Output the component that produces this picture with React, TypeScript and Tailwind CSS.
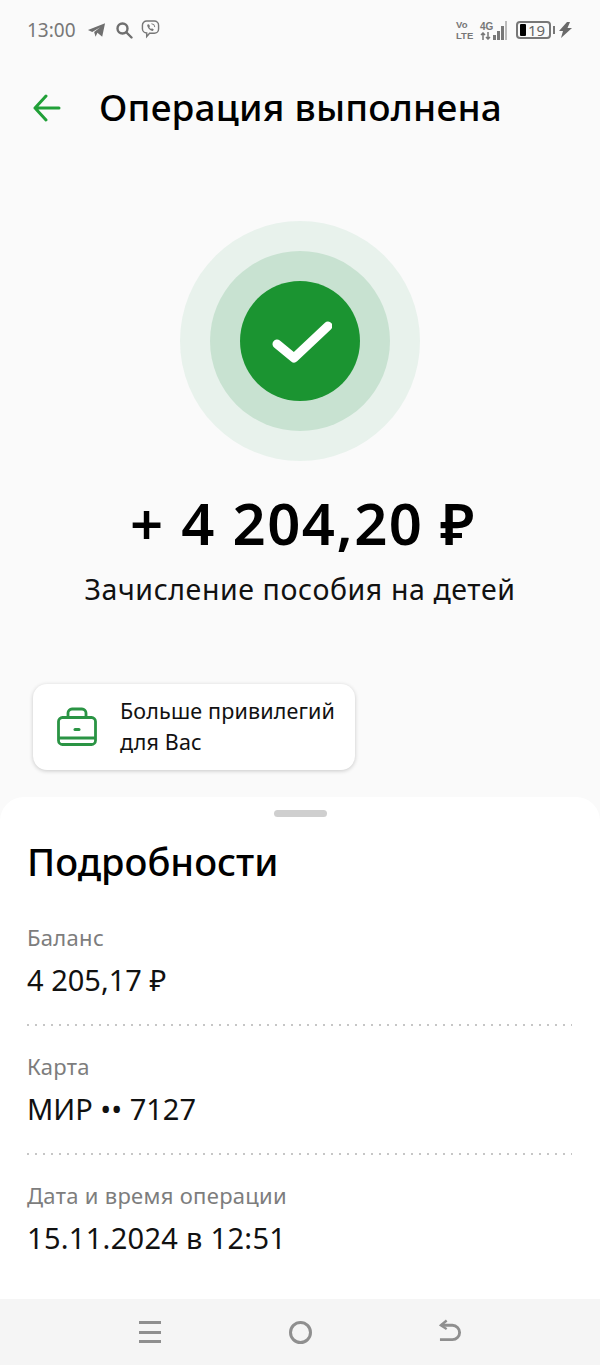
import React from "react";

const font = { fontFamily: "'Noto Sans', 'Open Sans', sans-serif" };

function StatusBar() {
  return (
    <div className="flex h-[60px] items-center justify-between pl-[27px] pr-[27px] text-[#7d7d7d]">
      <div className="flex items-center">
        <span className="text-[19px] leading-none text-[#777]">13:00</span>
        <svg width="19" height="18" viewBox="0 0 20 18" className="ml-[11px]">
          <path d="M1 9 19 2 16 16 11 12 9 16 7.500 11 14 6 5.500 11Z" fill="#6f6f6f" />
        </svg>
        <svg width="18" height="18" viewBox="0 0 18 18" fill="none" stroke="#6f6f6f" strokeWidth="2.400" className="ml-[9px]">
          <circle cx="7.500" cy="7.500" r="5" />
          <path d="M11.500 11.500 16.500 16.500" strokeLinecap="round" />
        </svg>
        <svg width="19" height="20" viewBox="0 0 20 20" fill="none" stroke="#777" strokeWidth="1.500" className="ml-[8px] -mt-[2px]">
          <path d="M6 1.500h8a4.500 4.500 0 0 1 4.500 4.500v4a4.500 4.500 0 0 1-4.500 4.500H9L6 18v-3.800A4.500 4.500 0 0 1 1.500 10V6A4.500 4.500 0 0 1 6 1.500Z" />
          <path d="M6.500 5.500c0 3 2.500 6 6 6.500l1-1.500-2-1.200-.8.700c-1-.5-1.600-1.200-2-2.200l.8-.8-1.200-2Z" fill="#777" stroke="none" />
          <path d="M11 4.500a3.500 3.500 0 0 1 3.500 3.500" strokeWidth="1" />
        </svg>
      </div>
      <div className="flex items-center">
        <div className="flex w-[18px] flex-col text-[9.500px] font-bold leading-[11px] text-[#777] [font-family:'Liberation_Sans',sans-serif]">
          <span>Vo</span>
          <span>LTE</span>
        </div>
        <div className="ml-[6px] flex w-[13px] flex-col text-[10px] font-bold leading-[11px] text-[#777] [font-family:'Liberation_Sans',sans-serif]">
          <span>4G</span>
          <svg width="11" height="8" viewBox="0 0 11 8" fill="none" stroke="#777" strokeWidth="1.500">
            <path d="M3 8V1M1 3l2-2 2 2M8 0v7M6 5l2 2 2-2" />
          </svg>
        </div>
        <div className="flex h-[20px] items-end gap-[1px]">
          <span className="h-[5px] w-[3px] bg-[#777]" />
          <span className="h-[9px] w-[3px] bg-[#777]" />
          <span className="h-[14px] w-[3px] bg-[#777]" />
          <span className="h-[19px] w-[2px] bg-[#bbb]" />
        </div>
        <div className="ml-[9px] flex h-[18px] w-[35px] items-center rounded-[4px] border-2 border-[#777] pl-[2px]">
          <span className="h-[12px] w-[6px] rounded-[1px] bg-black" />
          <span className="ml-[2px] text-[15px] leading-none text-[#666]">19</span>
        </div>
        <span className="ml-[2px] h-[8px] w-[2px] bg-[#777]" />
        <svg width="15" height="18" viewBox="0 0 15 18" className="ml-[3px]">
          <path d="M9 1 1 10h4l-2 7 11-10H9.500L12 1Z" fill="#6a6a6a" />
        </svg>
      </div>
    </div>
  );
}

function Row({ label, value, last }: { label: string; value: string; last?: boolean }) {
  return (
    <div className={last ? "h-[101px]" : "h-[129px]"}>
      <div className="text-[22px] leading-[28px] tracking-[0.3px] text-[#7d7d7d]">{label}</div>
      <div className={last ? "mt-[12px] text-[29px] leading-[34px] tracking-[0.3px] text-[#111]" : "mt-[12px] text-[29px] leading-[34px] text-[#111]"}>{value}</div>
      {!last && (
        <div className="mt-[27px] h-[2px] bg-[linear-gradient(90deg,#c6c6c6_2px,transparent_2px)] bg-[length:8px_2px]" />
      )}
    </div>
  );
}

export default function App() {
  return (
    <div className="flex h-[1365px] w-[600px] flex-col overflow-hidden bg-[#fafafa] text-black" style={font}>
      <StatusBar />
      <div className="mt-[4px] flex h-[88px] items-center pl-[33px]">
        <svg width="28" height="28" viewBox="0 0 28 28" fill="none" stroke="#21a038" strokeWidth="3" strokeLinecap="round" strokeLinejoin="round" className="-mt-[1px]">
          <path d="M2 14h24M13 2 2 14l11 12" />
        </svg>
        <h1 className="-mt-[3px] ml-[38px] text-[37px] font-medium leading-none tracking-[0.2px]">Операция выполнена</h1>
      </div>
      <div className="mt-[69px] flex justify-center">
        <div className="flex h-[240px] w-[240px] items-center justify-center rounded-full bg-[#e8f2ec]">
          <div className="flex h-[180px] w-[180px] items-center justify-center rounded-full bg-[#c8e2d1]">
            <div className="flex h-[120px] w-[120px] items-center justify-center rounded-full bg-[#1b9431]">
              <svg width="64" height="46" viewBox="0 0 64 46" fill="none" stroke="#fff" strokeWidth="9" strokeLinecap="round" strokeLinejoin="round">
                <path d="M9 26 26 40 60 8" />
              </svg>
            </div>
          </div>
        </div>
      </div>
      <div className="mt-[27px] pl-[6px] text-center text-[58px] font-semibold leading-[70px] tracking-[1.5px]">+ 4 204,20 ₽</div>
      <div className="mt-[14px] text-center text-[28.500px] leading-[34px] tracking-[0.6px] text-[#111]">Зачисление пособия на детей</div>
      <div className="ml-[33px] mt-[78px] flex h-[86px] w-[322px] items-center rounded-[14px] bg-white pl-[24px] shadow-[0_1px_4px_rgba(0,0,0,0.2)]">
        <svg width="40" height="40" viewBox="0 0 40 40" fill="none" stroke="#2a9444" strokeWidth="2.800" strokeLinejoin="round">
          <rect x="1.500" y="10.500" width="37" height="27" rx="4" />
          <path d="M1.500 31h37" />
          <path d="M11 10V6a4 4 0 0 1 4-4h10a4 4 0 0 1 4 4v4" />
          <path d="M18 22.500h4" strokeLinecap="round" strokeWidth="3" />
        </svg>
        <div className="-mt-[2px] ml-[23px] text-[21.500px] leading-[31px] tracking-[0.15px] text-[#111]">
          Больше привилегий
          <br />
          для Вас
        </div>
      </div>
      <div className="mt-[27px] flex flex-1 flex-col rounded-t-[24px] bg-white pl-[27px] pr-[28px]">
        <div className="ml-[1px] mt-[13px] h-[7px] w-[53px] self-center rounded-full bg-[#cfcfcf]" />
        <h2 className="mt-[21px] text-[38px] font-medium leading-[46px]">Подробности</h2>
        <div className="mt-[39px]">
          <Row label="Баланс" value="4 205,17 ₽" />
          <Row label="Карта" value="МИР •• 7127" />
          <Row label="Дата и время операции" value="15.11.2024 в 12:51" last />
        </div>
      </div>
      <div className="flex h-[66px] items-center justify-between bg-[#f5f5f5] pl-[139px] pr-[138px]">
        <div className="flex h-[24px] w-[22px] flex-col justify-between py-[1px]">
          <span className="h-[3px] bg-[#8f8f8f]" />
          <span className="h-[3px] bg-[#8f8f8f]" />
          <span className="h-[3px] bg-[#8f8f8f]" />
        </div>
        <div className="h-[23px] w-[23px] rounded-full border-[3px] border-[#8f8f8f]" />
        <svg width="23" height="26" viewBox="0 0 24 26" fill="none" stroke="#8f8f8f" strokeWidth="3">
          <path d="M2 6h12a7.500 7.500 0 0 1 0 15H1" />
          <path d="M8 1 2 6l6 4" strokeWidth="2.500" />
        </svg>
      </div>
    </div>
  );
}
